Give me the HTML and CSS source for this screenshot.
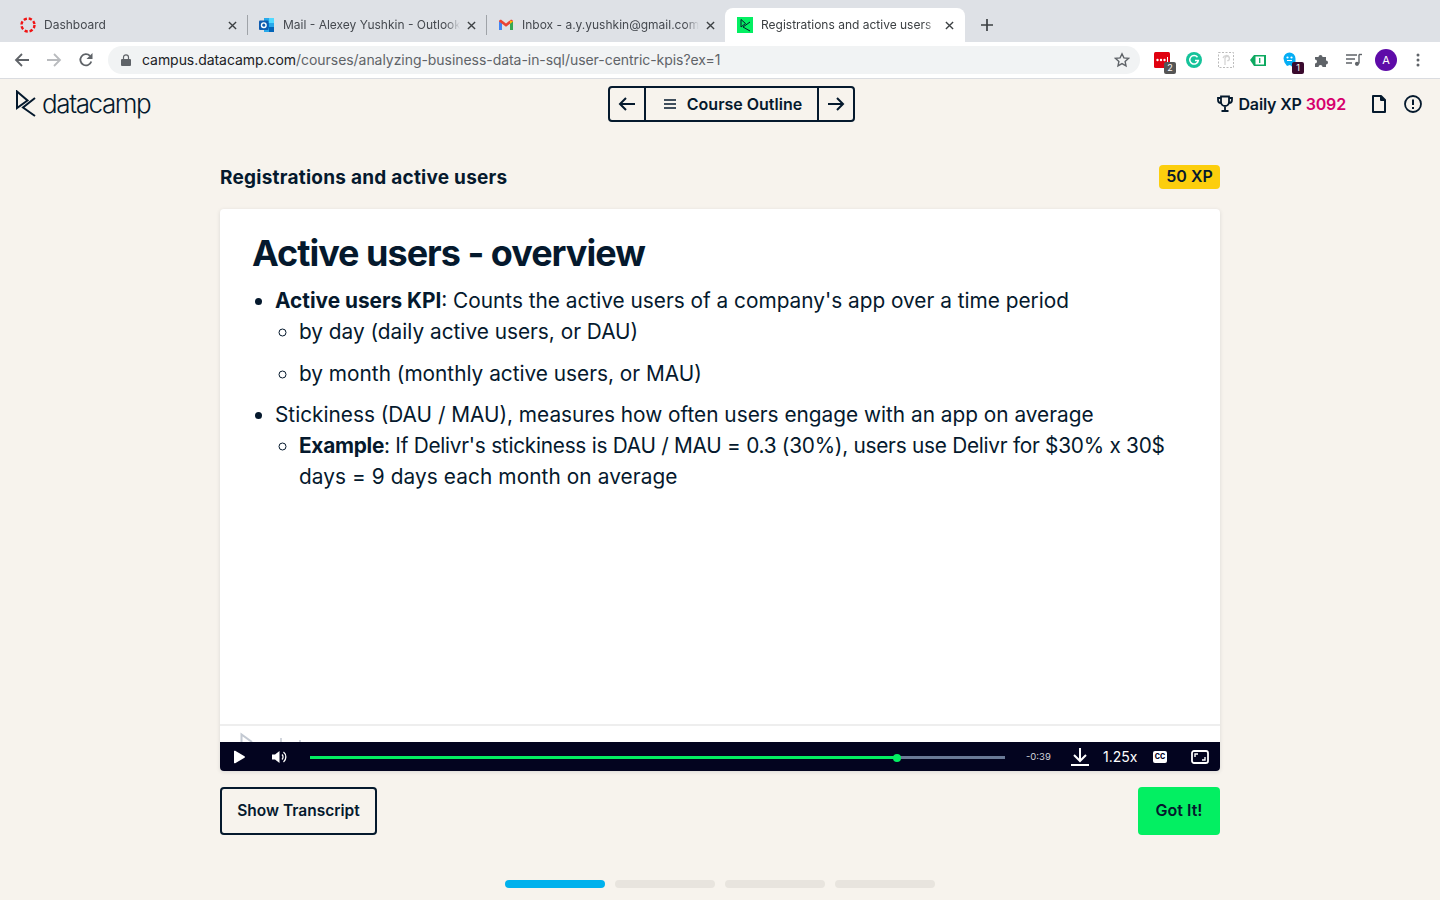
FILE: index.html
```html
<!DOCTYPE html>
<html lang="en">
<head>
<meta charset="UTF-8" />
<title>Registrations and active users</title>
<link rel="stylesheet" href="styles.css">
</head>
<body>

<div class="tabstrip">
  <div class="tab">
    <svg class="favicon" viewBox="0 0 16 16"><circle cx="8" cy="8" r="6.5" fill="none" stroke="#f01414" stroke-width="2.4" stroke-dasharray="3.2 1.9"/></svg>
    <span class="tab-title">Dashboard</span>
    <svg class="tab-x" viewBox="0 0 10 10"><path d="M1 1l8 8M9 1l-8 8"/></svg>
  </div>
  <div class="tab tab-sep">
    <svg class="favicon" viewBox="0 0 16 16"><path d="M5 1h10v14H5z" fill="#28a8ea"/><path d="M10 1h5v5h-5z" fill="#50d9ff"/><path d="M5 6h5v5H5z" fill="#0078d4"/><path d="M10 10h5v5h-5z" fill="#0364b8"/><rect x="0" y="3.5" width="9.5" height="9.5" rx="1" fill="#0f5cb0"/><circle cx="4.8" cy="8.2" r="2.3" fill="none" stroke="#fff" stroke-width="1.4"/></svg>
    <span class="tab-title">Mail - Alexey Yushkin - Outlook</span>
    <svg class="tab-x" viewBox="0 0 10 10"><path d="M1 1l8 8M9 1l-8 8"/></svg>
  </div>
  <div class="tab tab-sep">
    <svg class="favicon" viewBox="0 0 16 16"><path d="M1 13V4l3 2.2V13z" fill="#4285f4"/><path d="M15 13V4l-3 2.2V13z" fill="#34a853"/><path d="M1 4.5C1 3 2.7 2.3 3.8 3.2L8 6.5l4.2-3.3C13.3 2.3 15 3 15 4.5L12 6.8 8 9.8 4 6.8z" fill="#ea4335"/><path d="M12 3.4l3 1.1L12 6.8z" fill="#fbbc04"/></svg>
    <span class="tab-title">Inbox - a.y.yushkin@gmail.com</span>
    <svg class="tab-x" viewBox="0 0 10 10"><path d="M1 1l8 8M9 1l-8 8"/></svg>
  </div>
  <div class="tab tab-active">
    <svg class="favicon" viewBox="0 0 16 16"><rect width="16" height="16" fill="#03ef62"/><path d="M4 2.500v7.500l4.500-3.500zM13 5l-7 5 7 4" fill="none" stroke="#05192d" stroke-width="1"/></svg>
    <span class="tab-title">Registrations and active users</span>
    <svg class="tab-x" viewBox="0 0 10 10"><path d="M1 1l8 8M9 1l-8 8"/></svg>
  </div>
  <svg class="new-tab" viewBox="0 0 12 12"><path d="M6 0v12M0 6h12"/></svg>
</div>

<div class="toolbar">
  <svg class="tool" viewBox="0 0 16 16"><path d="M15 8H2M8 2L2 8l6 6" fill="none" stroke="#5f6368" stroke-width="1.800"/></svg>
  <svg class="tool" viewBox="0 0 16 16"><path d="M1 8h13M8 2l6 6-6 6" fill="none" stroke="#b9bbbe" stroke-width="1.800"/></svg>
  <svg class="tool" viewBox="0 0 16 16"><path d="M13.300 9.500A5.600 5.600 0 1 1 12 3.900" fill="none" stroke="#5f6368" stroke-width="1.800"/><path d="M14.500 1v6h-6z" fill="#5f6368"/></svg>
  <div class="omnibox">
    <svg class="lock" viewBox="0 0 10 12"><path d="M1 5h8a1 1 0 0 1 1 1v5a1 1 0 0 1-1 1H1a1 1 0 0 1-1-1V6a1 1 0 0 1 1-1z" fill="#5f6368"/><path d="M2.500 5.500V3.300a2.500 2.500 0 0 1 5 0v2.200" fill="none" stroke="#5f6368" stroke-width="1.200"/></svg>
    <span class="url"><span class="host">campus.datacamp.com</span>/courses/analyzing-business-data-in-sql/user-centric-kpis?ex=1</span>
    <svg class="star" viewBox="0 0 16 16"><path d="M8 1.800l1.900 4.100 4.500.5-3.300 3 .9 4.400L8 11.600l-4 2.200.9-4.400-3.300-3 4.500-.5z" fill="none" stroke="#5f6368" stroke-width="1.400"/></svg>
  </div>
  <div class="ext-row">
    <div class="ext">
      <svg viewBox="0 0 16 16"><rect width="16" height="16" rx="1.500" fill="#e0000f"/><circle cx="3.500" cy="8" r="1.200" fill="#fff"/><circle cx="7" cy="8" r="1.200" fill="#fff"/><circle cx="10.500" cy="8" r="1.200" fill="#fff"/><path d="M13.500 5v6" stroke="#fff"/></svg>
      <span class="ext-badge">2</span>
    </div>
    <div class="ext">
      <svg viewBox="0 0 16 16"><circle cx="8" cy="8" r="8" fill="#15c39a"/><path d="M11.500 5.200A4.300 4.300 0 1 0 12.300 8.500H9" fill="none" stroke="#fff" stroke-width="1.500"/></svg>
    </div>
    <div class="ext">
      <svg viewBox="0 0 16 16"><rect x=".5" y=".5" width="15" height="15" fill="none" stroke="#bbb" stroke-dasharray="2 1.500"/><path d="M7 13V6.500a2.200 2.200 0 1 1 2.200 2.200M5 6a3.500 3.500 0 0 1 6.500-.5" fill="none" stroke="#d4d4d4" stroke-width="1.300"/></svg>
    </div>
    <div class="ext">
      <svg viewBox="0 0 16 16"><path d="M0 8l4-5h12v11H4z" fill="#0da960"/><rect x="5.500" y="4.500" width="8.500" height="8" fill="#fff"/><path d="M9.700 6v5" stroke="#0da960" stroke-width="1.300"/></svg>
    </div>
    <div class="ext">
      <svg viewBox="0 0 16 16"><path d="M1.500 6.500a6 6 0 0 1 12 0v3.500l-2.500 1v4.500l-3-2.500-3 1-2.500-3.500z" fill="#05aef5"/><circle cx="5.500" cy="5.500" r="1.100" fill="#fff"/><circle cx="9.500" cy="5.500" r="1.100" fill="#fff"/><path d="M5 8.500h5" stroke="#fff"/></svg>
      <span class="ext-badge ext-badge-dark">1</span>
    </div>
    <div class="ext">
      <svg viewBox="0 0 16 16"><path d="M1 5h3.500a2 2 0 1 1 4 0H12v3.500a2 2 0 1 1 0 4V15H8.500a2 2 0 1 0-4 0H1v-3.500a2 2 0 1 0 0-4z" fill="#5f6368"/></svg>
    </div>
    <div class="ext">
      <svg viewBox="0 0 16 16"><path d="M0 3h11M0 7h9M0 11h6" stroke="#5f6368" stroke-width="1.300"/><path d="M13 2.500v9" stroke="#5f6368" stroke-width="1.400"/><circle cx="11" cy="11.800" r="2.100" fill="#5f6368"/><path d="M13 2.500h3" stroke="#5f6368" stroke-width="1.400"/></svg>
    </div>
    <span class="avatar">A</span>
    <svg class="kebab" viewBox="0 0 4 14"><circle cx="2" cy="2" r="1.500"/><circle cx="2" cy="7" r="1.500"/><circle cx="2" cy="12" r="1.500"/></svg>
  </div>
</div>

<header class="site-head">
  <div class="logo">
    <svg class="logo-mark" viewBox="0 0 22 28"><path d="M2 1.500V18l10.500-7.500zM20 8L8 17.500 20 26" fill="none" stroke="#05192d" stroke-width="2"/></svg>
    <span class="logo-text">datacamp</span>
  </div>
  <div class="course-nav">
    <span class="nav-arrow">
      <svg viewBox="0 0 18 16"><path d="M17 8H2M8 2L2 8l6 6" fill="none" stroke="#05192d" stroke-width="2"/></svg>
    </span>
    <span class="nav-outline">
      <svg viewBox="0 0 12 10"><path d="M0 1h12M0 5h12M0 9h12" stroke="#05192d" stroke-width="1.600"/></svg>
      Course Outline
    </span>
    <span class="nav-arrow nav-arrow-next">
      <svg viewBox="0 0 18 16"><path d="M1 8h15M10 2l6 6-6 6" fill="none" stroke="#05192d" stroke-width="2"/></svg>
    </span>
  </div>
  <div class="head-right">
    <svg class="trophy" viewBox="0 0 16 18"><path d="M4 1.500h8v5.500a4 4 0 0 1-8 0zM4 3H1v2a3 3 0 0 0 3 3M12 3h3v2a3 3 0 0 1-3 3M8 11v4M4.500 16h7" fill="none" stroke="#05192d" stroke-width="1.800"/></svg>
    <span class="daily">Daily XP <span class="xp-count">3092</span></span>
    <svg class="file-icon" viewBox="0 0 14 18"><path d="M1 1h8l4 4v12H1zM9 1v4h4" fill="none" stroke="#05192d" stroke-width="2" stroke-linejoin="round"/></svg>
    <svg class="head-icon" viewBox="0 0 18 18"><circle cx="9" cy="9" r="8" fill="none" stroke="#05192d" stroke-width="1.800"/><path d="M9 4.500v5.500M9 12v2" stroke="#05192d" stroke-width="2"/></svg>
  </div>
</header>

<main class="exercise">
  <div class="exercise-head">
    <h2>Registrations and active users</h2>
    <span class="xp-badge">50 XP</span>
  </div>

  <section class="slide-card">
    <div class="slide">
      <h1>Active users - overview</h1>
      <ul>
        <li><b>Active users KPI</b>: Counts the active users of a company's app over a time period
          <ul>
            <li>by day (daily active users, or DAU)</li>
            <li>by month (monthly active users, or MAU)</li>
          </ul>
        </li>
        <li>Stickiness (DAU / MAU), measures how often users engage with an app on average
          <ul>
            <li><span class="tight"><b>Example</b>: If Delivr's stickiness is DAU / MAU = 0.3 (30%), users use Delivr for $30% x 30$</span> <span class="loose">days = 9 days each month on average</span></li>
          </ul>
        </li>
      </ul>
    </div>
    <div class="slide-foot">
      <svg viewBox="0 0 80 16"><path d="M1.500 20V8.500L12 16" fill="none" stroke="#c3c9d2" stroke-width="2"/><path d="M41 12v4M60 14v2" stroke="#c3c9d2" stroke-width="1.500"/></svg>
    </div>
    <div class="player">
      <svg class="play" viewBox="0 0 12 14"><path d="M1 1.500v11a.8.8 0 0 0 1.200.7l9.300-5.500a.8.8 0 0 0 0-1.400L2.200.8A.8.8 0 0 0 1 1.500z" fill="#fff"/></svg>
      <svg class="volume" viewBox="0 0 15 14"><path d="M0 4.500h3L7.500 1v12L3 9.500H0z" fill="#fff"/><path d="M10 4.500a3.500 3.500 0 0 1 0 5M11.500 2a6.500 6.500 0 0 1 0 10" fill="none" stroke="#fff" stroke-width="1.300"/></svg>
      <div class="track">
        <div class="track-fill" style="width: 84.3%"></div>
        <span class="track-knob"></span>
      </div>
      <span class="time">-0:39</span>
      <svg class="download" viewBox="0 0 18 18"><path d="M9 0v12M3 7l6 6 6-6" fill="none" stroke="#fff" stroke-width="2"/><path d="M0 17h18" stroke="#fff" stroke-width="2"/></svg>
      <span class="speed">1.25x</span>
      <span class="cc">CC</span>
      <svg class="full" viewBox="0 0 18 14"><rect x="1" y="1" width="16" height="12" rx="2" fill="none" stroke="#fff" stroke-width="1.800"/><path d="M4 7V4h3M14 7v3h-3" fill="none" stroke="#fff" stroke-width="1.400"/></svg>
    </div>
  </section>

  <div class="actions">
    <button class="btn-outline">Show Transcript</button>
    <button class="btn-green">Got It!</button>
  </div>

  <div class="steps">
    <span class="step step-on"></span>
    <span class="step"></span>
    <span class="step"></span>
    <span class="step"></span>
  </div>
</main>

</body>
</html>
```

FILE: styles.css
```css
* {
  box-sizing: border-box;
}
html, body {
  margin: 0;
  height: 900px;
  overflow: hidden;
}
body {
  font-family: Inter, "Liberation Sans", sans-serif;
  background: #f7f3ed;
  color: #05192d;
}

/* browser chrome */
.tabstrip {
  height: 42px;
  background: #dee1e6;
  padding: 8px 0 0 8px;
  display: flex;
}
.tab {
  width: 239px;
  height: 34px;
  padding: 0 8px 0 12px;
  display: flex;
  align-items: center;
  font-size: 12px;
  color: #45494f;
}
.tab-sep {
  border-left: 1px solid #9fa3a8;
  height: 20px;
  margin-top: 7px;
  padding-left: 11px;
}
.tab-active {
  background: #fff;
  border-radius: 8px 8px 0 0;
  width: 240px;
  padding-right: 9px;
  color: #3c4043;
}
.favicon {
  width: 16px;
  height: 16px;
  flex: none;
  margin-right: 8px;
}
.tab-title {
  flex: 1;
  padding-bottom: 2px;
  white-space: nowrap;
  overflow: hidden;
  -webkit-mask-image: linear-gradient(to right, #000 calc(100% - 14px), transparent);
  mask-image: linear-gradient(to right, #000 calc(100% - 14px), transparent);
}
.tab-x {
  width: 9px;
  height: 9px;
  flex: none;
  margin: 0 2px 0 7px;
  stroke: #3c4043;
  stroke-width: 1.500;
}
.new-tab {
  width: 12px;
  height: 12px;
  margin: 11px 0 0 16px;
  stroke: #3c4043;
  stroke-width: 1.700;
}
.toolbar {
  height: 37px;
  background: #fff;
  border-bottom: 1px solid #dadce0;
  padding: 4px 0 5px 14px;
  display: flex;
  align-items: center;
  gap: 16px;
}
.tool {
  width: 16px;
  height: 16px;
  flex: none;
}
.omnibox {
  width: 1032px;
  height: 28px;
  margin-left: -2px;
  background: #f1f3f4;
  border-radius: 14px;
  display: flex;
  align-items: center;
  padding: 0 10px 0 13px;
  flex: none;
}
.lock {
  width: 10px;
  height: 12px;
  flex: none;
  margin-right: 11px;
}
.url {
  flex: 1;
  font-size: 14px;
  letter-spacing: -0.05px;
  color: #5f6368;
  white-space: nowrap;
}
.host {
  color: #202124;
}
.star {
  width: 16px;
  height: 16px;
}
.ext-row {
  display: flex;
  align-items: center;
  margin-left: -2px;
}
.ext {
  width: 16px;
  height: 16px;
  margin-right: 16px;
  position: relative;
  flex: none;
}
.ext svg {
  display: block;
  width: 16px;
  height: 16px;
}
.ext-badge {
  position: absolute;
  left: 10px;
  top: 10px;
  width: 12px;
  height: 12px;
  background: #555;
  color: #fff;
  border-radius: 2px;
  font-size: 9px;
  line-height: 12px;
  text-align: center;
}
.ext-badge-dark {
  background: #3a0a2e;
}
.avatar {
  width: 22px;
  height: 22px;
  border-radius: 50%;
  background: #5e0ba8;
  color: #fff;
  font-size: 11px;
  line-height: 22px;
  text-align: center;
  flex: none;
  margin-left: -3px;
}
.kebab {
  width: 4px;
  height: 14px;
  margin-left: 19px;
  fill: #5f6368;
}

/* site header */
.site-head {
  height: 51px;
  padding: 7px 18px 0 15px;
  display: flex;
  align-items: flex-start;
}
.logo {
  display: flex;
  align-items: flex-start;
  width: 593px;
}
.logo-mark {
  width: 22px;
  height: 28px;
  flex: none;
  margin-top: 4px;
}
.logo-text {
  font-size: 26px;
  font-weight: 300;
  letter-spacing: -1.400px;
  line-height: 30px;
  margin: 3px 0 0 5px;
}
.course-nav {
  width: 247px;
  height: 36px;
  border: 2px solid #05192d;
  border-radius: 4px;
  display: flex;
  font-weight: 600;
  font-size: 16px;
  line-height: 20px;
}
.nav-arrow {
  width: 34px;
  display: flex;
  align-items: center;
  justify-content: center;
  flex: none;
}
.nav-arrow svg {
  width: 18px;
  height: 16px;
}
.nav-outline {
  flex: 1;
  border-left: 2px solid #05192d;
  border-right: 2px solid #05192d;
  padding-bottom: 1px;
  display: flex;
  align-items: center;
  justify-content: center;
  gap: 11px;
}
.nav-outline svg {
  width: 12px;
  height: 10px;
  margin-left: 3px;
}
.head-right {
  margin-left: auto;
  display: flex;
  align-items: center;
  height: 36px;
}
.trophy {
  width: 16px;
  height: 18px;
  margin-right: 5px;
}
.daily {
  font-weight: 600;
  font-size: 16px;
  letter-spacing: -0.15px;
}
.xp-count {
  color: #d6006d;
}
.head-icon {
  width: 18px;
  height: 18px;
  margin-left: 18px;
}
.file-icon {
  width: 14px;
  height: 18px;
  margin-left: 26px;
}

/* exercise */
.exercise {
  width: 1000px;
  margin: 0 auto;
}
.exercise-head {
  height: 79px;
  padding-top: 36px;
  display: flex;
  justify-content: space-between;
  align-items: flex-start;
}
.exercise-head h2 {
  margin: 0;
  font-size: 19px;
  letter-spacing: 0.24px;
  line-height: 24px;
  font-weight: 700;
}
.xp-badge {
  width: 61px;
  height: 24px;
  margin-top: -1px;
  background: #fcce0d;
  border-radius: 4px;
  font-size: 16px;
  font-weight: 600;
  line-height: 22px;
  text-align: center;
}
.slide-card {
  height: 562px;
  background: #fff;
  border-radius: 4px;
  box-shadow: 0 1px 4px rgba(5, 25, 45, 0.12);
  display: flex;
  flex-direction: column;
  overflow: hidden;
}
.slide {
  height: 517px;
  padding: 20px 20px 0 32px;
  border-bottom: 2px solid #eeeeee;
  flex: none;
}
.slide h1 {
  margin: 0 0 8px;
  font-size: 36px;
  letter-spacing: -1px;
  line-height: 48px;
  font-weight: 700;
}
.slide ul {
  margin: 0;
  padding: 0 0 0 23px;
  list-style: disc;
  font-size: 20.800px;
  line-height: 31px;
}
.slide ul ul {
  padding-left: 24px;
  list-style: circle;
}
.slide ul ul li {
  margin-bottom: 10.500px;
}
.slide b {
  font-weight: 700;
}
.tight {
  letter-spacing: -0.26px;
}
.loose {
  letter-spacing: 0.09px;
}
.slide-foot {
  height: 16px;
  padding-left: 20px;
  overflow: hidden;
  flex: none;
}
.slide-foot svg {
  display: block;
  width: 80px;
  height: 16px;
}
.player {
  height: 29px;
  background: #03041f;
  display: flex;
  align-items: center;
  padding: 0 11px 0 13px;
  color: #fff;
  flex: none;
}
.play {
  width: 12px;
  height: 14px;
  flex: none;
}
.volume {
  width: 15px;
  height: 14px;
  margin-left: 27px;
  flex: none;
}
.track {
  width: 695px;
  height: 3px;
  margin: 2px 0 0 23px;
  background: #6a7a96;
  position: relative;
  flex: none;
}
.track-fill {
  height: 3px;
  background: #03ef62;
}
.track-knob {
  position: absolute;
  left: 583px;
  top: -2.500px;
  width: 8px;
  height: 8px;
  border-radius: 50%;
  background: #03ef62;
}
.time {
  width: 25px;
  margin-left: 21px;
  font-size: 9.500px;
  color: #d0d3da;
  flex: none;
}
.download {
  width: 18px;
  height: 18px;
  margin-left: 20px;
  flex: none;
}
.speed {
  width: 34px;
  margin-left: 14px;
  font-size: 14px;
  flex: none;
}
.cc {
  width: 14px;
  height: 12px;
  margin-left: 16px;
  background: #fff;
  color: #03041f;
  border-radius: 2px;
  font-size: 7px;
  font-weight: 800;
  line-height: 12px;
  text-align: center;
  flex: none;
}
.full {
  width: 18px;
  height: 14px;
  margin-left: 24px;
  flex: none;
}
.actions {
  margin-top: 16px;
  display: flex;
  justify-content: space-between;
}
.actions button {
  height: 48px;
  border-radius: 4px;
  font-family: inherit;
  font-size: 16px;
  font-weight: 600;
  color: #05192d;
  padding: 0 0 2px;
}
.btn-outline {
  width: 157px;
  background: transparent;
  border: 2px solid #05192d;
}
.actions .btn-outline {
  font-size: 15.500px;
}
.btn-green {
  width: 82px;
  background: #03ef62;
  border: none;
}
.steps {
  margin-top: 45px;
  display: flex;
  justify-content: center;
  gap: 10px;
}
.step {
  width: 100px;
  height: 8px;
  border-radius: 4px;
  background: #e8e4de;
}
.step-on {
  background: #00b1ed;
}
```
